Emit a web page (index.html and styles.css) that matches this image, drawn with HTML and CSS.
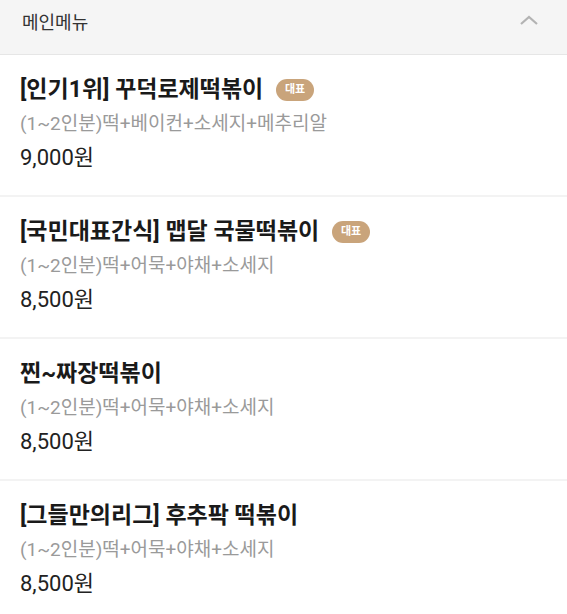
FILE: index.html
```html
<!DOCTYPE html>
<html>

<head>
    <title>메인메뉴</title>
    <link rel="stylesheet" href="styles.css">
</head>

<body>
    <div class="menu-section">
        <div class="section-header">
            <span class="section-title">메인메뉴</span>
            <svg class="chevron" width="20" height="12" viewBox="0 0 20 12">
                <polyline points="2,10 10,3 18,10" fill="none" stroke="#b3b3b3" stroke-width="2.2" />
            </svg>
        </div>

        <div class="menu-item">
            <div class="item-title">[인기1위] 꾸덕로제떡볶이 <span class="badge">대표</span></div>
            <div class="item-desc">(1~2인분)떡+베이컨+소세지+메추리알</div>
            <div class="item-price">9,000원</div>
        </div>

        <div class="menu-item">
            <div class="item-title">[국민대표간식] 맵달 국물떡볶이 <span class="badge">대표</span></div>
            <div class="item-desc">(1~2인분)떡+어묵+야채+소세지</div>
            <div class="item-price">8,500원</div>
        </div>

        <div class="menu-item">
            <div class="item-title">찐~짜장떡볶이</div>
            <div class="item-desc">(1~2인분)떡+어묵+야채+소세지</div>
            <div class="item-price">8,500원</div>
        </div>

        <div class="menu-item">
            <div class="item-title">[그들만의리그] 후추팍 떡볶이</div>
            <div class="item-desc">(1~2인분)떡+어묵+야채+소세지</div>
            <div class="item-price">8,500원</div>
        </div>
    </div>
</body>

</html>
```

FILE: styles.css
```css
body {
    margin: 0;
    background: #fff;
    font-family: "Roboto", "Noto Sans CJK KR", sans-serif;
    color: #222;
}

.section-header {
    display: flex;
    align-items: center;
    justify-content: space-between;
    height: 54px;
    padding: 0 28px 0 22px;
    background: #f5f5f5;
    border-bottom: 1px solid #e6e6e6;
}

.section-title {
    font-size: 18px;
    color: #333;
    margin-top: -12px;
}

.chevron {
    margin-top: -14px;
}

.menu-item {
    padding: 22px 20px 24px 20px;
    border-bottom: 2px solid #f3f3f3;
}

.item-title {
    display: flex;
    align-items: center;
    font-size: 23px;
    font-weight: bold;
    line-height: 26px;
    color: #1a1a1a;
    white-space: pre;
}

.badge {
    display: inline-block;
    margin-left: 7px;
    padding: 0 9px;
    height: 22px;
    line-height: 22px;
    border-radius: 11px;
    background: #c9a47b;
    color: #fff;
    font-size: 11px;
    font-weight: bold;
}

.item-desc {
    margin-top: 8px;
    font-size: 19px;
    line-height: 26px;
    color: #9a9a9a;
}

.item-price {
    margin-top: 8px;
    font-size: 22px;
    line-height: 26px;
    color: #222;
}
```
